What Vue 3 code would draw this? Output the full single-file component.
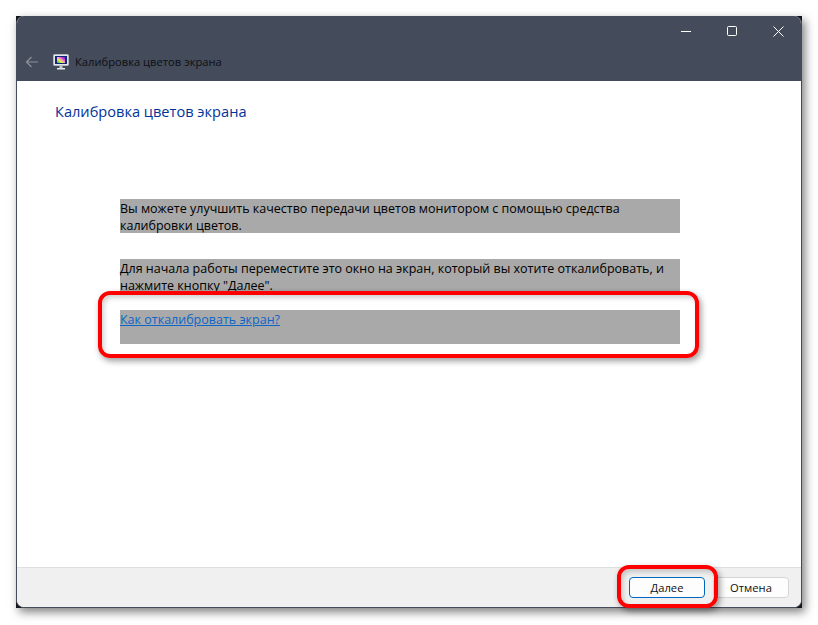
<script setup>
const blocks = [
  {
    id: 1,
    text: 'Вы можете улучшить качество передачи цветов монитором с помощью средства калибровки цветов.',
  },
  {
    id: 2,
    text: 'Для начала работы переместите это окно на экран, который вы хотите откалибровать, и нажмите кнопку "Далее".',
  },
]
</script>

<template>
  <div class="page">
    <div class="frame">
      <div class="window">
        <header class="titlebar">
          <div class="controls">
            <button class="ctrl">
              <svg width="10" height="10" viewBox="0 0 10 10"><path d="M0 5.5h10" stroke="#fff" fill="none" /></svg>
            </button>
            <button class="ctrl">
              <svg width="10" height="10" viewBox="0 0 10 10"><rect x="0.5" y="0.5" width="9" height="9" rx="1" stroke="#fff" fill="none" /></svg>
            </button>
            <button class="ctrl">
              <svg width="11" height="11" viewBox="0 0 11 11"><path d="M0.5 0.5l10 10M10.5 0.5l-10 10" stroke="#fff" fill="none" /></svg>
            </button>
          </div>
          <div class="nav">
            <svg class="back" width="13" height="12" viewBox="0 0 13 12">
              <path d="M13 6H1.5M6.5 1L1.5 6l5 5" stroke="#8d919b" stroke-width="1.2" fill="none" />
            </svg>
            <svg class="app-icon" width="16" height="16" viewBox="0 0 16 16">
              <defs>
                <linearGradient id="spectrum" x1="0" y1="1" x2="1" y2="0">
                  <stop offset="0" stop-color="#22b14c" />
                  <stop offset="0.35" stop-color="#e8f03c" />
                  <stop offset="0.55" stop-color="#f0a0c0" />
                  <stop offset="0.75" stop-color="#d03cc8" />
                  <stop offset="1" stop-color="#2438d8" />
                </linearGradient>
              </defs>
              <rect x="0.5" y="0.5" width="15" height="11" rx="1" fill="#e3e6ea" stroke="#b4b9c0" />
              <rect x="2" y="2" width="12" height="8" fill="#14247c" />
              <rect x="4" y="3" width="8" height="6" fill="url(#spectrum)" />
              <path d="M6.5 12h3v2h-3z" fill="#c3c7cc" />
              <path d="M4 14h8v1.5H4z" fill="#e4e6e9" />
            </svg>
            <span class="title">Калибровка цветов экрана</span>
          </div>
        </header>

        <main class="content">
          <h1 class="heading">Калибровка цветов экрана</h1>
          <div class="text-col">
            <p v-for="block in blocks" :key="block.id" class="para">{{ block.text }}</p>
            <p class="para link-row"><a class="link" href="#">Как откалибровать экран?</a></p>
          </div>
        </main>

        <footer class="footer">
          <button class="btn btn--primary"><span><u>Д</u>алее</span></button>
          <button class="btn">Отмена</button>
        </footer>
      </div>
    </div>
    <div class="mark mark--link"></div>
    <div class="mark mark--next"></div>
  </div>
</template>

<style>
html,
body {
  margin: 0;
  background: #fff;
}
</style>

<style scoped>
.page {
  position: relative;
  width: 818px;
  height: 625px;
  padding: 16px 16px 0;
  box-sizing: border-box;
  overflow: hidden;
  font-family: "Open Sans", "Noto Sans", sans-serif;
}

.frame {
  width: 786px;
  height: 592px;
  background: #14161c;
  box-shadow: 3px 4px 9px rgba(0, 0, 0, 0.5);
}

.window {
  height: 100%;
  display: flex;
  flex-direction: column;
  box-sizing: border-box;
  border: 1px solid #444b5a;
  border-top: 0;
  border-radius: 8px;
  overflow: hidden;
  background: #fff;
}

.titlebar {
  height: 65px;
  flex: none;
  background: #444b5a;
  display: flex;
  flex-direction: column;
}

.controls {
  display: flex;
  justify-content: flex-end;
  height: 30px;
}

.ctrl {
  width: 46px;
  padding: 0;
  border: 0;
  background: none;
  display: flex;
  align-items: center;
  justify-content: center;
}

.nav {
  display: flex;
  align-items: center;
  margin-top: 7px;
  height: 17px;
  padding-left: 8px;
}

.back {
  margin-right: 15px;
}

.app-icon {
  margin-right: 6px;
}

.title {
  font-size: 11.2px;
  color: #0d0f14;
}

.content {
  flex: 1;
  padding: 20px 0 0 38px;
}

.heading {
  margin: 0;
  font-size: 14.6px;
  line-height: 20px;
  font-weight: 400;
  color: #003399;
}

.text-col {
  width: 560px;
  margin: 78px 0 0 65px;
}

.para {
  height: 34px;
  box-sizing: border-box;
  margin: 0 0 26px;
  padding-top: 1px;
  background: #a9a9a9;
  font-size: 12.5px;
  line-height: 17px;
  color: #000;
}

.link-row {
  margin-top: -9px;
}

.link {
  color: #0d66c8;
}

.footer {
  height: 40px;
  flex: none;
  box-sizing: border-box;
  background: #f0f0f0;
  border-top: 1px solid #dfdfdf;
  display: flex;
  justify-content: flex-end;
  align-items: flex-start;
  gap: 8px;
  padding: 9px 12px 0 0;
}

.btn {
  width: 76px;
  height: 21px;
  padding: 0;
  box-sizing: border-box;
  border: 1px solid #d5d5d5;
  border-radius: 4px;
  background: #fdfdfd;
  font-family: inherit;
  font-size: 11.2px;
  color: #111;
}

.btn--primary {
  border: 1px solid #0067c0;
}

.mark {
  position: absolute;
  box-sizing: border-box;
  border: 4px solid #fe0000;
  border-radius: 12px;
  box-shadow: 2px 3px 6px rgba(0, 0, 0, 0.4), inset 2px 3px 5px rgba(0, 0, 0, 0.18);
}

.mark--link {
  left: 98px;
  top: 291px;
  width: 601px;
  height: 67px;
}

.mark--next {
  left: 617px;
  top: 565px;
  width: 101px;
  height: 43px;
}
</style>
